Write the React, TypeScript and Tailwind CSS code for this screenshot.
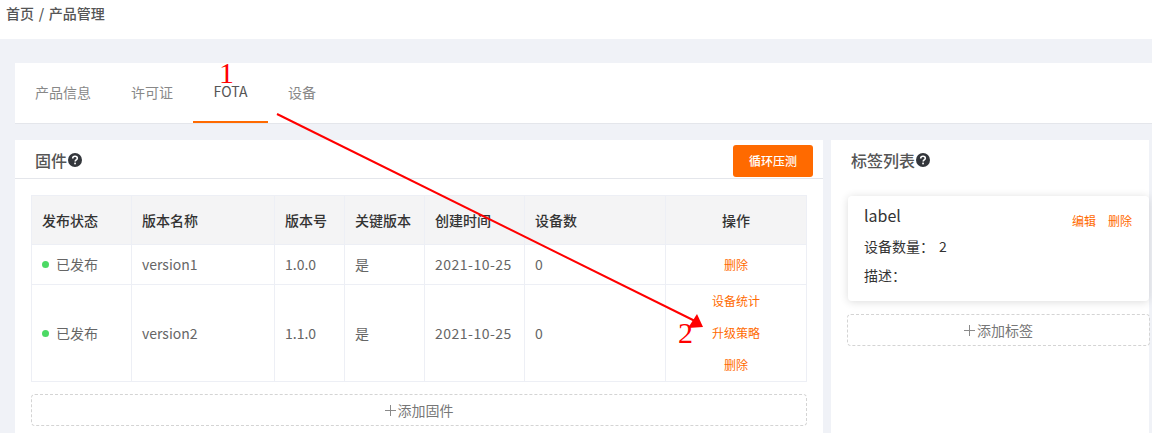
const font = { fontFamily: '"Noto Sans CJK SC", "Noto Sans", sans-serif' };

function QuestionDot() {
  return (
    <svg viewBox="0 0 14 14" className="h-[14px] w-[14px] shrink-0">
      <circle cx="7" cy="7" r="7" fill="#33363b" />
      <path
        d="M4.7 5.4c0-1.3 1-2.1 2.3-2.1s2.3.8 2.3 2c0 1.7-2.1 1.6-2.1 3.2"
        fill="none"
        stroke="#fff"
        strokeWidth="1.6"
      />
      <rect x="6.2" y="9.6" width="1.7" height="1.7" fill="#fff" />
    </svg>
  );
}

function PlusMark() {
  return (
    <svg viewBox="0 0 11 11" className="mr-[2px] h-[11px] w-[11px] shrink-0">
      <path d="M0 5.5h11M5.5 0v11" stroke="#8a8a8a" strokeWidth="1" fill="none" />
    </svg>
  );
}

function Status() {
  return (
    <div className="flex items-center">
      <span className="mr-[7px] h-[7px] w-[7px] rounded-full bg-[#4cd964]" />
      <span>已发布</span>
    </div>
  );
}

const cell = "border border-[#edeff5] px-[10px] align-middle";
const head = "border border-[#edeff5] px-[10px] align-middle font-medium text-[#333]";

export default function App() {
  return (
    <div
      className="relative h-[433px] w-[1152px] overflow-hidden bg-[#f0f2f7] text-[14px] text-[#666]"
      style={font}
    >
      {/* breadcrumb */}
      <div className="flex h-[39px] items-start bg-white pl-[6px] pt-[3px] text-[14px] font-medium leading-[20px] text-[#555] [word-spacing:1.5px]">
        首页 / 产品管理
      </div>

      {/* tabs */}
      <div className="mt-[24px] ml-[15px] flex h-[61px] items-stretch border-b border-[#e4e6eb] bg-white">
        <div className="flex w-[96px] items-center pl-[20px] pb-[1px] text-[#888]">产品信息</div>
        <div className="flex w-[82px] items-center pl-[20px] pb-[1px] text-[#888]">许可证</div>
        <div className="flex w-[75px] items-center justify-center border-b-2 border-[#ff6a00] pb-[2px] leading-[16px] text-[#555]">
          FOTA
        </div>
        <div className="flex items-center pl-[20px] pb-[1px] text-[#888]">设备</div>
      </div>

      <div className="mt-[16px] ml-[15px] flex items-start gap-[8px]">
        {/* firmware */}
        <div className="h-[293px] w-[808px] bg-white">
          <div className="flex h-[39px] items-start justify-between border-b border-[#e4e6eb] pl-[20px] pr-[10px]">
            <div className="flex items-center gap-[1px] pt-[8px] text-[16px] font-medium leading-[24px] text-[#555]">
              固件
              <QuestionDot />
            </div>
            <button className="mt-[5px] h-[32px] w-[80px] rounded-[3px] bg-[#ff6a00] text-[12px] font-medium text-white">
              循环压测
            </button>
          </div>

          <div className="px-[16px] pt-[16px]">
            <table className="w-[775px] table-fixed border-collapse text-[14px]">
              <colgroup>
                <col className="w-[100px]" />
                <col className="w-[143px]" />
                <col className="w-[70px]" />
                <col className="w-[80px]" />
                <col className="w-[100px]" />
                <col className="w-[141px]" />
                <col className="w-[141px]" />
              </colgroup>
              <thead>
                <tr className="h-[49px] bg-[#f4f4f5] text-left text-[14px]">
                  <th className={head}>发布状态</th>
                  <th className={head}>版本名称</th>
                  <th className={head}>版本号</th>
                  <th className={head}>关键版本</th>
                  <th className={head}>创建时间</th>
                  <th className={head}>设备数</th>
                  <th className={`${head} text-center`}>操作</th>
                </tr>
              </thead>
              <tbody>
                <tr className="h-[40px]">
                  <td className={cell}><Status /></td>
                  <td className={cell}>version1</td>
                  <td className={cell}>1.0.0</td>
                  <td className={cell}>是</td>
                  <td className={`${cell} tracking-[0.5px]`}>2021-10-25</td>
                  <td className={cell}>0</td>
                  <td className={`${cell} text-center text-[12px] text-[#ff6a00]`}>删除</td>
                </tr>
                <tr className="h-[97px]">
                  <td className={cell}><Status /></td>
                  <td className={cell}>version2</td>
                  <td className={cell}>1.1.0</td>
                  <td className={cell}>是</td>
                  <td className={`${cell} tracking-[0.5px]`}>2021-10-25</td>
                  <td className={cell}>0</td>
                  <td className={`${cell} text-center text-[12px] text-[#ff6a00]`}>
                    <div className="flex flex-col gap-[14px] leading-[18px]">
                      <span>设备统计</span>
                      <span>升级策略</span>
                      <span>删除</span>
                    </div>
                  </td>
                </tr>
              </tbody>
            </table>
            <div className="mt-[12px] flex h-[32px] w-[776px] items-center justify-center rounded-[4px] border border-dashed border-[#d4d4d4] text-[#777]">
              <PlusMark />
              添加固件
            </div>
          </div>
        </div>

        {/* labels */}
        <div className="h-[293px] w-[318px] bg-white pl-[17px]">
          <div className="flex items-center gap-[1px] pl-[3px] pt-[8px] text-[16px] font-medium leading-[24px] text-[#555]">
            标签列表
            <QuestionDot />
          </div>
          <div className="mt-[24px] h-[105px] w-[301px] rounded-[4px] bg-white pl-[16px] pr-[17px] pt-[7px] shadow-[0_1px_8px_rgba(0,0,0,0.14)]">
            <div className="flex items-start justify-between">
              <span className="text-[16px] leading-[24px] text-[#333]">label</span>
              <div className="mt-[9px] flex gap-[12px] text-[12px] leading-[18px] text-[#ff6a00]">
                <span>编辑</span>
                <span>删除</span>
              </div>
            </div>
            <div className="mt-[6px] flex leading-[21px] text-[#333]">
              <span className="w-[75px]">设备数量：</span>
              <span>2</span>
            </div>
            <div className="mt-[8px] leading-[21px] text-[#333]">描述：</div>
          </div>
          <div className="mt-[13px] flex h-[32px] w-[303px] -translate-x-px items-center justify-center rounded-[4px] border border-dashed border-[#d4d4d4] text-[#777]">
            <PlusMark />
            添加标签
          </div>
        </div>
      </div>

      {/* red annotations on top of the screenshot */}
      <svg viewBox="0 0 1152 433" className="pointer-events-none absolute left-0 top-0 h-[433px] w-[1152px]">
        <line x1="277" y1="114" x2="697" y2="322" stroke="#ff0000" strokeWidth="2" />
        <polygon points="703,327 697,314 688,328" fill="#ff0000" />
      </svg>
      <span
        className="absolute left-[219px] top-[63px] text-[30px] leading-[20px] text-[#ff0000]"
        style={{ fontFamily: '"Liberation Serif", serif' }}
      >
        1
      </span>
      <span
        className="absolute left-[678px] top-[316px] text-[30px] leading-[34px] text-[#ff0000]"
        style={{ fontFamily: '"Liberation Serif", serif' }}
      >
        2
      </span>
    </div>
  );
}
